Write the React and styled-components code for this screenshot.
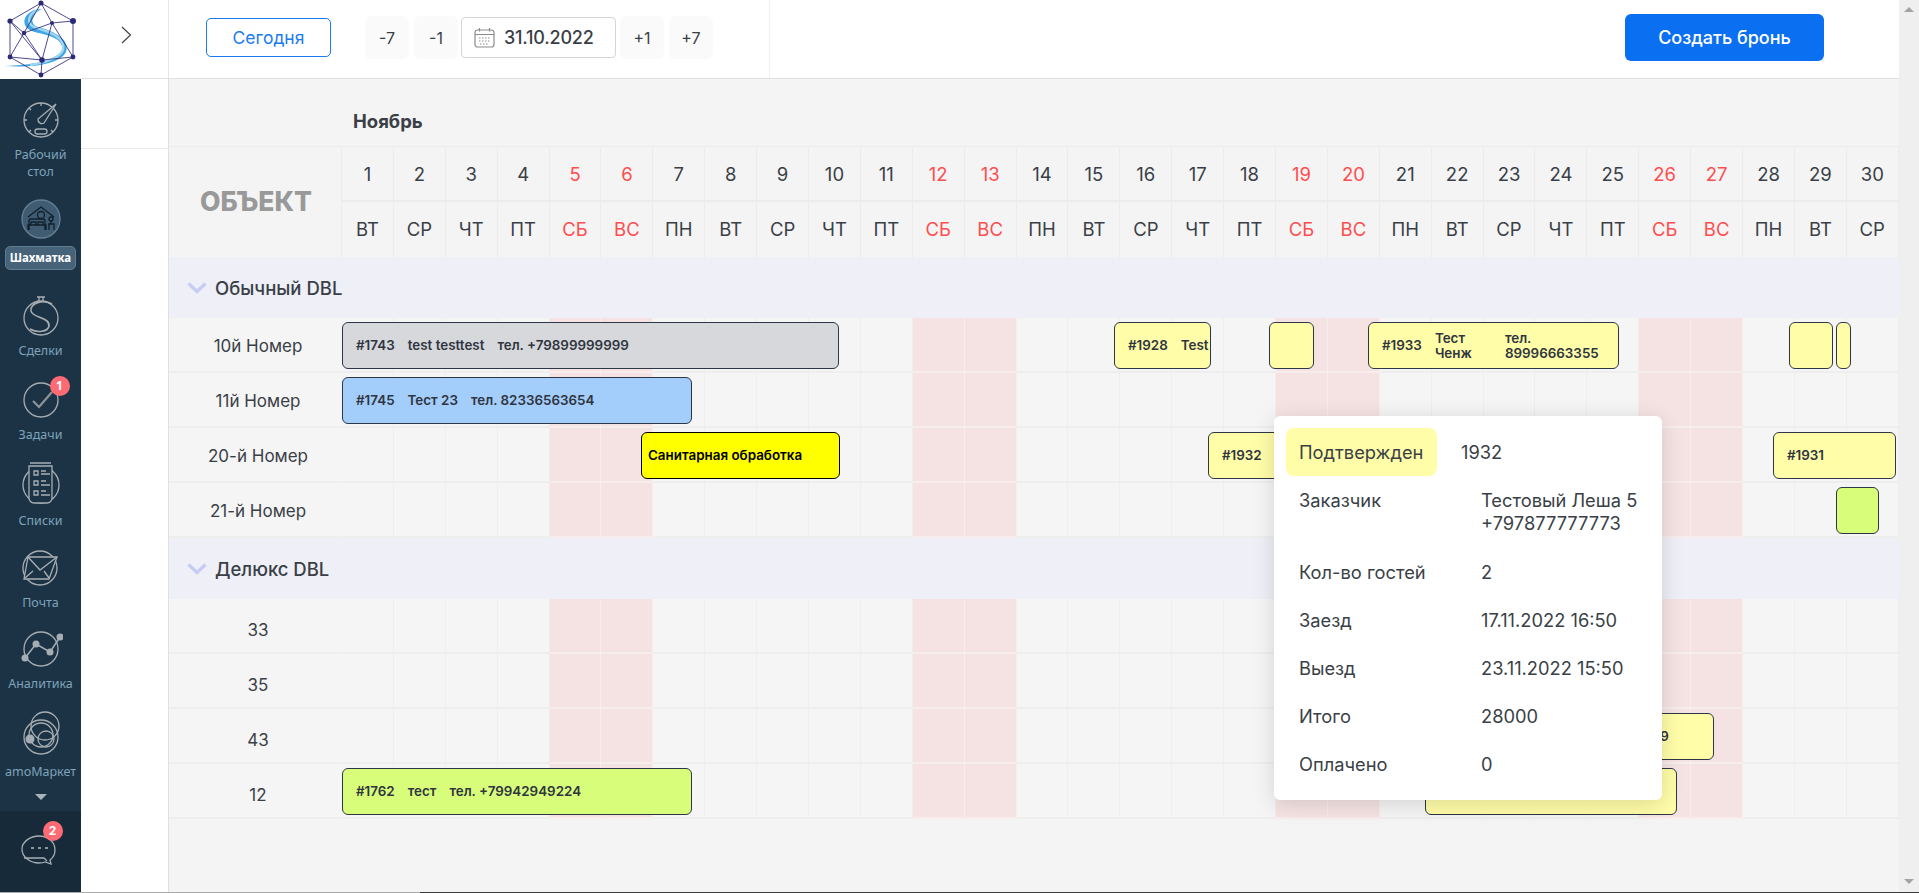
import React from 'react'
import styled, { createGlobalStyle } from 'styled-components'

// Styling

const text = '#3a3f47'
const CELL = 51.9

const Global = createGlobalStyle`
  html, body { margin: 0; padding: 0; height: 100%; overflow: hidden; background: #fff; }
  body { font-family: Inter, 'Noto Sans', sans-serif; color: ${text}; }
  * { box-sizing: border-box; }
`
const Page = styled.div`
  display: flex;
  height: 892px;
  width: 1919px;
  overflow: hidden;
`
const BottomLine = styled.div`
  height: 1px;
  background: linear-gradient(to right, #aaa 0, #aaa 420px, #3a3a3a 420px);
`

// Sidebar

const Sidebar = styled.aside`
  width: 81px;
  flex: none;
  display: flex;
  flex-direction: column;
`
const LogoBox = styled.div`
  height: 79px;
  background: #fff;
  display: flex;
  flex: none;
`
const Nav = styled.nav`
  flex: 1;
  background: #1c3345;
  display: flex;
  flex-direction: column;
  align-items: center;
  font-family: 'Noto Sans', sans-serif;
`
const NavItem = styled.div`
  padding-top: ${p => p.$top}px;
  width: 100%;
  display: flex;
  flex-direction: column;
  align-items: center;
  text-align: center;
`
const IconBox = styled.div`
  position: relative;
  width: 48px;
  height: ${p => p.$h || 44}px;
  display: flex;
  align-items: flex-start;
  justify-content: center;
`
const NavLabel = styled.div`
  margin-top: 4px;
  font-size: 12.5px;
  line-height: 17px;
  color: #7ea3ba;
  white-space: pre-line;
`
const ActivePill = styled.div`
  margin-top: 5px;
  width: 71px;
  height: 24px;
  border-radius: 5px;
  background: #46637a;
  border: 1px solid #5f7b90;
  color: #fff;
  font-size: 11.5px;
  font-weight: 700;
  line-height: 22px;
`
const Badge = styled.span`
  position: absolute;
  left: ${p => p.$left}px;
  top: ${p => p.$top}px;
  width: 20px;
  height: 20px;
  border-radius: 50%;
  background: #ff6b75;
  color: #fff;
  font-size: 12px;
  font-weight: 700;
  line-height: 20px;
  text-align: center;
`
const MoreArrow = styled.div`
  margin-top: 14px;
  width: 0;
  height: 0;
  border-left: 6px solid transparent;
  border-right: 6px solid transparent;
  border-top: 6px solid #a9b3ba;
`
const ChatFooter = styled.div`
  height: 81px;
  flex: none;
  background: #162a39;
  display: flex;
  justify-content: center;
  padding-top: 19px;
`

// Main area

const Main = styled.div`
  flex: 1;
  display: flex;
  flex-direction: column;
  min-width: 0;
`
const TopBar = styled.header`
  height: 79px;
  flex: none;
  display: flex;
  border-bottom: 1px solid #e0e0e0;
  background: #fff;
`
const Toggle = styled.div`
  width: 88px;
  flex: none;
  border-right: 1px solid #e6e6e6;
  display: flex;
  align-items: flex-start;
  justify-content: center;
  padding: 26px 0 0 3px;
`
const DateTools = styled.div`
  width: 601px;
  flex: none;
  border-right: 1px solid #f0f0f0;
  display: flex;
  align-items: flex-start;
  padding: 16px 0 0 37px;
`
const TodayButton = styled.button`
  width: 125px;
  height: 39px;
  margin: 2px 34px 0 0;
  border: 1px solid #1a7bf0;
  border-radius: 5px;
  background: #fff;
  color: #1a7bf0;
  font: 400 17.5px Inter, sans-serif;
`
const StepButton = styled.button`
  width: 44px;
  height: 43px;
  margin-right: ${p => p.$gap}px;
  border: 0;
  border-radius: 6px;
  background: #fafafa;
  color: ${text};
  font: 400 16px Inter, sans-serif;
`
const DateBox = styled.div`
  width: 155px;
  height: 41px;
  margin: 1px 4px 0 0;
  border: 1px solid #d4d4d4;
  border-radius: 4px;
  display: flex;
  align-items: center;
  gap: 9px;
  padding-left: 12px;
  font-size: 18px;
  font-weight: 500;
  letter-spacing: -0.2px;
`
const CreateButton = styled.button`
  margin: 14px 75px 0 auto;
  width: 199px;
  height: 47px;
  border: 0;
  border-radius: 6px;
  background: #0b6ff2;
  color: #fff;
  font: 500 18px Inter, sans-serif;
`
const Body = styled.div`
  flex: 1;
  display: flex;
  min-height: 0;
`
const SidePanel = styled.div`
  width: 88px;
  flex: none;
  background: #fff;
  border-right: 1px solid #e0e0e0;
`
const SidePanelHead = styled.div`
  height: 70px;
  border-bottom: 1px solid #e8e8e8;
`
const Board = styled.div`
  position: relative;
  flex: 1;
  background: #f4f4f4;
  min-width: 0;
`
const MonthRow = styled.div`
  height: 67px;
  padding: 32px 0 0 184px;
  font-size: 18.5px;
  font-weight: 700;
  line-height: 20px;
`
const HeadGrid = styled.div`
  display: flex;
  height: 111px;
  border-top: 1px solid #ececec;
`
const ObjectHead = styled.div`
  width: 173px;
  flex: none;
  display: flex;
  align-items: center;
  justify-content: center;
  font-size: 26.5px;
  font-weight: 800;
  color: #999;
  border-right: 1px solid #ececec;
  padding: 0 0 2px 2px;
`
const HeadRow = styled.div`
  display: flex;
  height: ${p => p.$h}px;
  border-bottom: ${p => (p.$line ? '2px solid #ececec' : '0')};
`
const HeadCell = styled.div`
  width: ${CELL}px;
  flex: none;
  display: flex;
  align-items: center;
  justify-content: center;
  font-size: 18.5px;
  padding-bottom: ${p => p.$up || 0}px;
  color: ${p => (p.$weekend ? '#ff4d4f' : text)};
  border-right: 1px solid #ececec;
`
const Group = styled.div`
  height: 61px;
  width: 1730px;
  background: #eeeff7;
  display: flex;
  align-items: center;
  padding-left: 18px;
  gap: 8px;
  font-size: 18.5px;
  font-weight: 500;
`
const Row = styled.div`
  display: flex;
  height: 55px;
`
const RowLabel = styled.div`
  width: 172px;
  flex: none;
  display: flex;
  align-items: center;
  justify-content: center;
  font-size: 17px;
  background: #f5f5f5;
  border-bottom: 2px solid #eeeeee;
  padding: ${p => p.$shift}px 0 0 6px;
`
const Track = styled.div`
  position: relative;
  display: flex;
  width: ${CELL * 30}px;
  margin-left: 1px;
`
const Cell = styled.div`
  width: ${CELL}px;
  flex: none;
  background: ${p => (p.$weekend ? '#f5e3e3' : '#f5f5f5')};
  border-right: 1px solid ${p => (p.$weekend ? '#f8eded' : '#eeeeee')};
  border-bottom: 2px solid ${p => (p.$weekend ? '#f8eded' : '#eeeeee')};
`
const Bar = styled.div`
  position: absolute;
  top: 4px;
  left: ${p => p.$left}px;
  width: ${p => p.$width}px;
  height: 47px;
  display: flex;
  align-items: center;
  gap: 13px;
  padding-left: ${p => p.$pad ?? 13}px;
  overflow: hidden;
  white-space: nowrap;
  border: 1px solid ${p => (p.$dark ? '#000' : '#2d3748')};
  border-radius: 6px;
  background: ${p => p.$bg};
  color: ${p => (p.$dark ? '#000' : '#2f3540')};
  font-size: 13.4px;
  font-weight: 600;
  line-height: 15px;
`
const Field = styled.span`
  flex: none;
  width: ${p => (p.$w ? `${p.$w}px` : 'auto')};
  white-space: ${p => (p.$w ? 'normal' : 'nowrap')};
`
const Popup = styled.div`
  position: absolute;
  left: 1105px;
  top: 337px;
  width: 388px;
  height: 384px;
  padding: 12px 12px 0;
  background: #fff;
  border-radius: 6px;
  box-shadow: 0 4px 22px rgba(0, 0, 0, 0.14);
  font-size: 18.3px;
  line-height: 23px;
`
const StatusRow = styled.div`
  display: flex;
  align-items: center;
  height: 48px;
  margin-bottom: 13px;
`
const StatusChip = styled.div`
  width: 151px;
  height: 48px;
  padding-left: 13px;
  margin-right: 24px;
  display: flex;
  align-items: center;
  border-radius: 8px;
  background: #fffda8;
`
const InfoRow = styled.div`
  display: flex;
  padding-left: 13px;
  height: ${p => p.$h || 48}px;
`
const InfoLabel = styled.div`
  width: 182px;
  flex: none;
`
const Scrollbar = styled.div`
  width: 20px;
  flex: none;
  background: #efefef;
  display: flex;
  flex-direction: column;
  justify-content: space-between;
  align-items: center;
  padding: 7px 0 8px;
`
const ScrollArrow = styled.div`
  width: 0;
  height: 0;
  border-left: 5px solid transparent;
  border-right: 5px solid transparent;
  border-top: ${p => (p.$down ? '5px solid #a3a3a3' : '0')};
  border-bottom: ${p => (p.$down ? '0' : '5px solid #a3a3a3')};
`

// Drawings

const Logo = () => {
  const nodes = [[41, 3, 2.5], [73, 21, 3], [73, 57, 2.4], [41, 75, 2.4], [10, 57, 2.4], [10, 21, 2.6], [52, 23, 2], [24, 33, 2.2], [42, 60, 2.8]]
  const edges = 'M41 3L73 21L73 57L41 75L10 57L10 21ZM41 3L52 23L73 21M52 23L24 33L41 3M10 21L24 33L10 57M24 33L42 60L10 57M42 60L52 23L73 57M42 60L73 57M42 60L41 75M42 60L10 21'
  return (
    <svg width="81" height="79" viewBox="0 0 81 79">
      <path d="M42 9C28 9 20 20 27 28C34 35 58 33 62 46C65 58 40 65 4 66C34 68 60 64 66 52C71 38 50 30 38 27C30 25 30 14 42 9Z" fill="#3da6e4" />
      <path d="M38 10C28 14 26 23 34 27C46 31 66 36 63 50C60 58 44 63 30 65" fill="none" stroke="#9fd6f2" strokeWidth="2.4" />
      <path d={edges} fill="none" stroke="#3a3580" strokeWidth="0.9" />
      {nodes.map(([x, y, r]) => <circle key={`${x}-${y}`} cx={x} cy={y} r={r} fill="#2b2a78" />)}
    </svg>
  )
}

const Svg = ({ children, h = 44, w = 44 }) => (
  <svg width={w} height={h} viewBox={`0 0 ${w} ${h}`} fill="none" stroke="#a7aeb3" strokeWidth="1.3">{children}</svg>
)

const GaugeIcon = () => (
  <Svg>
    <circle cx="22" cy="22" r="17" />
    <path d="M37 6L25 25a4 4 0 0 1-6-4Z" fill="#1c3345" />
    <rect x="16" y="31" width="12" height="5" rx="2.5" />
    <path d="M22 5v3M5 22h3M36 22h3M10 10l2 2M10 34l2-2M34 34l-2-2" />
  </Svg>
)
const BookingIcon = () => (
  <svg width="44" height="44" viewBox="0 0 44 44" fill="none" stroke="#0f1f2b" strokeWidth="1.3">
    <circle cx="22" cy="22" r="19" fill="#3f5c72" stroke="#667f92" />
    <path d="M9 20L22 10L35 20" />
    <circle cx="22" cy="18" r="3.5" />
    <path d="M10 33V24a2 2 0 0 1 2-2h12a2 2 0 0 1 2 2v9M9 33V28h18v5M12 28v-3h5v3M19 28v-3h5v3M29 27h6v6M30 33v-6M32 27v-3" />
    <circle cx="32" cy="22" r="2" />
  </svg>
)
const DealsIcon = () => (
  <Svg>
    <circle cx="22" cy="24" r="17" />
    <path d="M18 3h8M20 3v4M24 3v4" />
    <path d="M33 10C24 5 11 9 12 17C13 24 31 23 30 32C29 38 18 39 11 35" strokeWidth="1.6" />
  </Svg>
)
const TasksIcon = () => (
  <Svg>
    <circle cx="22" cy="22" r="17" />
    <path d="M14 23l6 6L33 14" stroke="#8b959c" strokeWidth="2.2" />
  </Svg>
)
const ListsIcon = () => (
  <Svg h={48}>
    <circle cx="22" cy="25" r="18" />
    <path d="M11 3h21M10 6h23v32a5 5 0 0 1-5 5H15a5 5 0 0 1-5-5Z" fill="#1c3345" />
    <path d="M15 11h4v4h-4zM15 21h4v4h-4zM15 31h4v4h-4zM22 11h5M22 14h9M22 21h5M22 25h9M22 31h5M22 35h9" />
  </Svg>
)
const MailIcon = () => (
  <Svg>
    <circle cx="21" cy="22" r="17" />
    <path d="M9 11H38L30 33H5Z" fill="#1c3345" />
    <path d="M9 11L21 24L38 11M6 32L14 25M30 32L25 25" />
  </Svg>
)
const ChartIcon = () => (
  <Svg>
    <circle cx="22" cy="22" r="17" />
    <path d="M6 31L17 17L31 25L41 10" strokeWidth="1.5" />
    <g fill="#a7aeb3" stroke="none">
      <circle cx="6" cy="31" r="3.5" />
      <circle cx="17" cy="17" r="3.5" />
      <circle cx="31" cy="25" r="3.5" />
      <circle cx="41" cy="10" r="3.5" />
    </g>
  </Svg>
)
const MarketIcon = () => (
  <Svg>
    <circle cx="22" cy="26" r="17" />
    <circle cx="26" cy="15" r="14" />
    <circle cx="22" cy="24" r="12" />
    <circle cx="27" cy="28" r="8" />
    <circle cx="11" cy="28" r="4.5" fill="#a7aeb3" stroke="none" />
  </Svg>
)
const ChatIcon = () => (
  <Svg w={44} h={44}>
    <path d="M20 6C29 6 36 12 36 20C36 24 35 27 31 30L32 34L26 32C24 33 22 33 20 33C11 33 3 27 3 19C3 12 11 6 20 6Z" />
    <path d="M5 28H25L28 31" />
    <path d="M12 18h3M19 18h3M26 18h3" strokeWidth="2" stroke="#8b959c" />
  </Svg>
)
const ChevronRight = () => (
  <svg width="11" height="18" viewBox="0 0 11 18" fill="none" stroke="#444" strokeWidth="1.2"><path d="M1 1l8.5 8L1 17" /></svg>
)
const ChevronDown = () => (
  <svg width="20" height="12" viewBox="0 0 20 12" fill="none" stroke="#c6cdf5" strokeWidth="3.4"><path d="M1.5 1.5L10 9.5L18.5 1.5" /></svg>
)
const CalendarIcon = () => (
  <svg width="21" height="21" viewBox="0 0 21 21" fill="none" stroke="#8c8c8c" strokeWidth="1.2">
    <rect x="1" y="3" width="19" height="17" rx="2.5" />
    <path d="M1 7.5h19M5.5 1v3.5M15.5 1v3.5" />
    <path d="M5 11h11M5 14h11M6 17h9" strokeDasharray="1.5 1.5" />
  </svg>
)

// Data

const weekNames = ['ВТ', 'СР', 'ЧТ', 'ПТ', 'СБ', 'ВС', 'ПН']
const days = Array.from({ length: 30 }, (_, i) => ({
  day: i + 1,
  week: weekNames[i % 7],
  weekend: i % 7 === 4 || i % 7 === 5,
}))

const grey = '#d7d8db'
const blue = '#a3cdfb'
const pale = '#fffda8'
const lime = '#d8fd7a'

const groups = [
  {
    name: 'Обычный DBL',
    shift: 2,
    rows: [
      {
        name: '10й Номер',
        bars: [
          { x: 342, to: 839, bg: grey, fields: ['#1743', 'test testtest', 'тел. +79899999999'] },
          { x: 1114, to: 1211, bg: pale, fields: ['#1928', 'Test'] },
          { x: 1269, to: 1314, bg: pale },
          { x: 1368, to: 1619, bg: pale, wrap: true, fields: ['#1933', 'Тест Ченж', 'тел. 89996663355'] },
          { x: 1789, to: 1833, bg: pale },
          { x: 1836, to: 1850, bg: pale },
        ],
      },
      { name: '11й Номер', bars: [{ x: 342, to: 692, bg: blue, fields: ['#1745', 'Тест 23', 'тел. 82336563654'] }] },
      {
        name: '20-й Номер',
        bars: [
          { x: 641, to: 840, bg: '#ffff00', dark: true, pad: 6, fields: ['Санитарная обработка'] },
          { x: 1208, to: 1330, bg: pale, fields: ['#1932'] },
          { x: 1773, to: 1896, bg: pale, fields: ['#1931'] },
        ],
      },
      { name: '21-й Номер', bars: [{ x: 1836, to: 1879, bg: lime }] },
    ],
  },
  {
    name: 'Делюкс DBL',
    shift: 8,
    rows: [
      { name: '33', bars: [] },
      { name: '35', bars: [] },
      { name: '43', bars: [{ x: 1560, to: 1714, bg: pale, pad: 68, fields: ['#1939'] }] },
      {
        name: '12',
        bars: [
          { x: 342, to: 692, bg: lime, fields: ['#1762', 'тест', 'тел. +79942949224'] },
          { x: 1425, to: 1677, bg: pale },
        ],
      },
    ],
  },
]

const navItems = [
  { top: 19, label: 'Рабочий\nстол', icon: <GaugeIcon /> },
  { top: 17, active: true, label: 'Шахматка', icon: <BookingIcon /> },
  { top: 24, label: 'Сделки', icon: <DealsIcon /> },
  { top: 19, label: 'Задачи', icon: <TasksIcon />, badge: 1 },
  { top: 17, h: 48, label: 'Списки', icon: <ListsIcon /> },
  { top: 17, label: 'Почта', icon: <MailIcon /> },
  { top: 16, label: 'Аналитика', icon: <ChartIcon /> },
  { top: 19, h: 48, label: 'amoМаркет', icon: <MarketIcon /> },
]

const info = [
  { label: 'Заказчик', value: ['Тестовый Леша 5', '+797877777773'], h: 72 },
  { label: 'Кол-во гостей', value: ['2'] },
  { label: 'Заезд', value: ['17.11.2022 16:50'] },
  { label: 'Выезд', value: ['23.11.2022 15:50'] },
  { label: 'Итого', value: ['28000'] },
  { label: 'Оплачено', value: ['0'] },
]

// Component

export default function App() {
  return (
    <>
      <Global />
      <Page>
        <Sidebar>
          <LogoBox><Logo /></LogoBox>
          <Nav>
            {navItems.map(item => (
              <NavItem key={item.label} $top={item.top}>
                <IconBox $h={item.h}>
                  {item.icon}
                  {item.badge ? <Badge $left={33} $top={-2}>{item.badge}</Badge> : null}
                </IconBox>
                {item.active ? <ActivePill>{item.label}</ActivePill> : <NavLabel>{item.label}</NavLabel>}
              </NavItem>
            ))}
            <MoreArrow />
          </Nav>
          <ChatFooter>
            <IconBox>
              <ChatIcon />
              <Badge $left={26} $top={-9}>2</Badge>
            </IconBox>
          </ChatFooter>
        </Sidebar>
        <Main>
          <TopBar>
            <Toggle><ChevronRight /></Toggle>
            <DateTools>
              <TodayButton>Сегодня</TodayButton>
              <StepButton $gap={5}>-7</StepButton>
              <StepButton $gap={3}>-1</StepButton>
              <DateBox><CalendarIcon />31.10.2022</DateBox>
              <StepButton $gap={5}>+1</StepButton>
              <StepButton>+7</StepButton>
            </DateTools>
            <CreateButton>Создать бронь</CreateButton>
          </TopBar>
          <Body>
            <SidePanel><SidePanelHead /></SidePanel>
            <Board>
              <MonthRow>Ноябрь</MonthRow>
              <HeadGrid>
                <ObjectHead>ОБЪЕКТ</ObjectHead>
                <div>
                  <HeadRow $h={55} $line>
                    {days.map(d => <HeadCell key={d.day} $weekend={d.weekend}>{d.day}</HeadCell>)}
                  </HeadRow>
                  <HeadRow $h={56}>
                    {days.map(d => <HeadCell key={d.day} $weekend={d.weekend} $up={2}>{d.week}</HeadCell>)}
                  </HeadRow>
                </div>
              </HeadGrid>
              {groups.map(group => (
                <React.Fragment key={group.name}>
                  <Group><ChevronDown />{group.name}</Group>
                  {group.rows.map(row => (
                    <Row key={row.name}>
                      <RowLabel $shift={group.shift}>{row.name}</RowLabel>
                      <Track>
                        {days.map(d => <Cell key={d.day} $weekend={d.weekend} />)}
                        {row.bars.map(bar => (
                          <Bar key={bar.x} $left={bar.x - 342} $width={bar.to - bar.x} $bg={bar.bg} $dark={bar.dark} $pad={bar.pad}>
                            {(bar.fields || []).map((f, i) => (
                              <Field key={f} $w={bar.wrap && i > 0 ? (i === 1 ? 57 : 100) : undefined}>{f}</Field>
                            ))}
                          </Bar>
                        ))}
                      </Track>
                    </Row>
                  ))}
                </React.Fragment>
              ))}
              <Popup>
                <StatusRow>
                  <StatusChip>Подтвержден</StatusChip>
                  1932
                </StatusRow>
                {info.map(r => (
                  <InfoRow key={r.label} $h={r.h}>
                    <InfoLabel>{r.label}</InfoLabel>
                    <div>{r.value.map(v => <div key={v}>{v}</div>)}</div>
                  </InfoRow>
                ))}
              </Popup>
            </Board>
          </Body>
        </Main>
        <Scrollbar>
          <ScrollArrow />
          <ScrollArrow $down />
        </Scrollbar>
      </Page>
      <BottomLine />
    </>
  )
}
